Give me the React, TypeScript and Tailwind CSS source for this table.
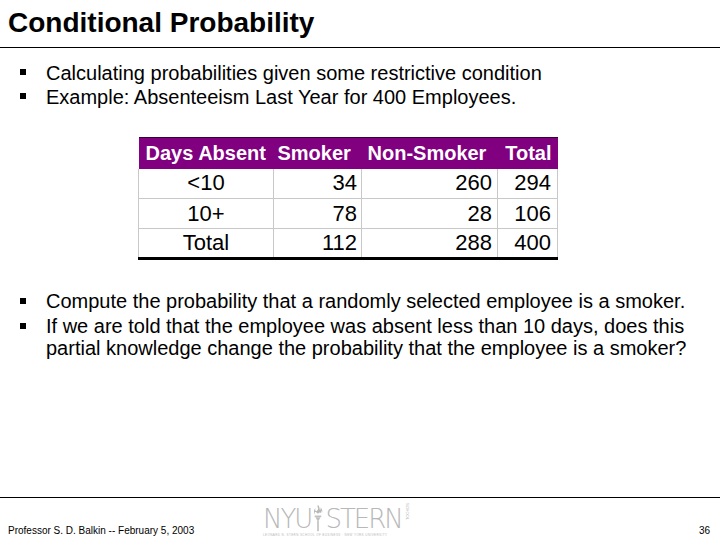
import React from "react";

const Bullet = ({ children }: { children: React.ReactNode }) => (
  <div className="flex items-start">
    <div className="w-[46px] shrink-0 flex justify-start pl-[20px] pt-[8px]">
      <div className="w-[6px] h-[6px] bg-black" />
    </div>
    <div>{children}</div>
  </div>
);

const Torch = () => (
  <svg width="12" height="28" viewBox="0 0 14 34" className="mx-[1px]">
    <path d="M7 1 C5 4 9 5 6 8 C4 10 3 7 4 5 C1 8 2 12 4 13 C2 11 3 9 5 10 C6 12 8 12 9 10 C10 12 11 10 11 8 C12 10 12 12 10 13 C13 11 13 7 10 4 C11 7 9 8 9 6 C9 4 8 3 7 1 Z" fill="#b8b8b8" />
    <rect x="3" y="14" width="8" height="2" fill="#c0c0c0" />
    <path d="M4 16 L10 16 L8 20 L6 20 Z" fill="#c0c0c0" />
    <rect x="6" y="20" width="2" height="13" fill="#c0c0c0" />
  </svg>
);

export default function App() {
  const rows = [
    ["<10", "34", "260", "294"],
    ["10+", "78", "28", "106"],
    ["Total", "112", "288", "400"],
  ];
  const logoFont = { fontFamily: '"DejaVu Sans", sans-serif', fontWeight: 200 };
  return (
    <div
      className="w-[720px] h-[540px] bg-white text-black overflow-hidden flex flex-col"
      style={{ fontFamily: '"Liberation Sans", Arial, sans-serif' }}
    >
      <div className="pl-[8px] pt-[7px] h-[47px] text-[28px] leading-[32px] font-bold">
        Conditional Probability
      </div>
      <div className="h-[1px] bg-black w-full" />

      <div className="mt-[13px] text-[20px] leading-[24px] flex flex-col">
        <Bullet>Calculating probabilities given some restrictive condition</Bullet>
        <Bullet>Example: Absenteeism Last Year for 400 Employees.</Bullet>
      </div>

      <div className="mt-[28px] ml-[138px]">
        <table className="border-collapse table-fixed" style={{ width: 419 }}>
          <colgroup>
            <col className="w-[135px]" />
            <col className="w-[88px]" />
            <col className="w-[136px]" />
            <col className="w-[60px]" />
          </colgroup>
          <thead>
            <tr className="h-[31px] bg-[#800080] text-white text-[20px] font-bold border-t border-[#3a003a]">
              <th className="font-bold text-left pl-[7px] pr-0 leading-[30px]">Days Absent</th>
              <th className="font-bold text-left pl-[4px] leading-[30px]">Smoker</th>
              <th className="font-bold text-left pl-[6px] leading-[30px]">Non-Smoker</th>
              <th className="font-bold text-right pr-[6px] leading-[30px]">Total</th>
            </tr>
          </thead>
          <tbody className="text-[22px]">
            {rows.map((r, i) => (
              <tr
                key={i}
                className={
                  i === 2
                    ? "h-[30px] border-b-[3px] border-black"
                    : "h-[30px] border-b border-[#c8c8c8]"
                }
              >
                <td className="text-center border-l border-r border-[#c8c8c8] leading-[28px]">{r[0]}</td>
                <td className="text-right pr-[4px] border-r border-[#c8c8c8] leading-[28px]">{r[1]}</td>
                <td className="text-right pr-[5px] border-r border-[#c8c8c8] leading-[28px]">{r[2]}</td>
                <td className="text-right pr-[6px] border-r border-[#c8c8c8] leading-[28px]">{r[3]}</td>
              </tr>
            ))}
          </tbody>
        </table>
      </div>

      <div className="mt-[30px] text-[20px] leading-[22px] flex flex-col gap-[3px]">
        <Bullet>Compute the probability that a randomly selected employee is a smoker.</Bullet>
        <Bullet>
          If we are told that the employee was absent less than 10 days, does this
          <br />
          partial knowledge change the probability that the employee is a smoker?
        </Bullet>
      </div>

      <div className="flex-1" />
      <div className="h-[1px] bg-black w-full" />
      <div className="h-[42px] flex items-end">
        <div className="pl-[8px] pb-[3px] text-[10px] leading-[12px] w-[255px]">
          Professor S. D. Balkin -- February 5, 2003
        </div>
        <div className="flex flex-col items-start ml-[8px] pt-[7px] self-start text-[#b8b8b8]">
          <div className="flex items-end h-[27px]">
            <span className="text-[26px] leading-[26px] tracking-[-2px]" style={logoFont}>
              NYU
            </span>
            <Torch />
            <span className="text-[26px] leading-[26px] tracking-[-2px]" style={logoFont}>
              STERN
            </span>
            <span className="text-[4px] leading-[4px] ml-[3px] mb-[12px] [writing-mode:vertical-rl]">
              SCHOOL
            </span>
          </div>
          <div className="text-[3px] leading-[5px] tracking-[0.4px] mt-[1px] whitespace-nowrap">
            LEONARD N. STERN SCHOOL OF BUSINESS · NEW YORK UNIVERSITY
          </div>
        </div>
        <div className="flex-1" />
        <div className="pr-[10px] pb-[3px] text-[10px] leading-[12px]">36</div>
      </div>
    </div>
  );
}
